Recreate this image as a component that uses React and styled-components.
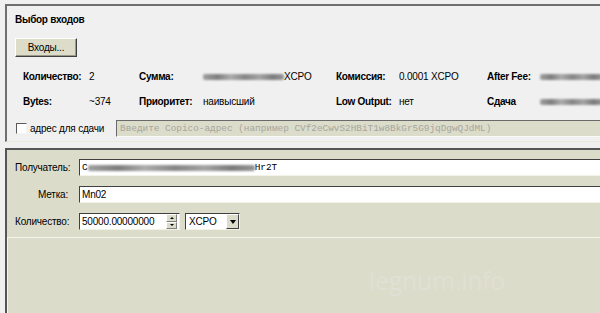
import styled, { createGlobalStyle } from 'styled-components'

const Global = createGlobalStyle`
  html, body {
    margin: 0;
    padding: 0;
  }
  body {
    background: #f0f0f0;
    font-family: "Liberation Sans", Arial, sans-serif;
    font-size: 10px;
    letter-spacing: -0.2px;
    color: #000;
  }
`

const Page = styled.div`
  width: 600px;
  height: 313px;
  overflow: hidden;
  box-sizing: border-box;
  padding: 4px 0 0 5px;
  display: flex;
  flex-direction: column;
`

const InputsPanel = styled.section`
  border-top: 2px solid #6f6f6f;
  border-left: 2px solid #6f6f6f;
  background: #f0f0f0;
  padding: 7px 0 4px 8px;
  display: flex;
  flex-direction: column;
  border-bottom: 1px solid #e9e9dc;
`

const Title = styled.div`
  font-weight: bold;
  letter-spacing: -0.3px;
  line-height: 13px;
`

const PushButton = styled.button`
  margin-top: 12px;
  width: 62px;
  height: 19px;
  padding: 0;
  font: inherit;
  letter-spacing: inherit;
  color: #000;
  background: #dcdcc8;
  border: 1px solid;
  border-color: #fff #404040 #404040 #fff;
  box-shadow: inset -1px -1px 0 #9a9a8c;
`

const Stats = styled.div`
  margin-top: 7px;
  padding-left: 8px;
  display: grid;
  grid-template-columns: 66px 50px 64px 133px 63px 88px 53px 1fr;
  grid-auto-rows: 25px;
  align-items: center;
  white-space: nowrap;
`

const StatLabel = styled.span`
  font-weight: bold;
  letter-spacing: -0.3px;
`

const StatValue = styled.span`
  display: flex;
  align-items: center;
`

/* redacted value in the screenshot: a grey smear */
const Smudge = styled.span`
  display: inline-block;
  flex: none;
  width: ${p => p.$w}px;
  height: 6px;
  border-radius: 2px;
  background: linear-gradient(
    90deg,
    #a0a0a0,
    #7e7e7e 18%,
    #acacac 34%,
    #868686 52%,
    #a4a4a4 70%,
    #7c7c7c 86%,
    #969696
  );
  filter: blur(1px);
`

const ChangeRow = styled.div`
  margin-top: 6px;
  height: 17px;
  display: flex;
  align-items: center;
`

const CheckBox = styled.span`
  margin-left: 1px;
  width: 9px;
  height: 9px;
  background: #fff;
  border: 1px solid;
  border-color: #5a5a5a #f4f4f4 #f4f4f4 #5a5a5a;
`

const CheckLabel = styled.span`
  margin-left: 3px;
  width: 86px;
`

const AddressField = styled.div`
  flex: 1;
  height: 17px;
  box-sizing: border-box;
  background: #dcdccb;
  border-top: 1px solid #6a6a6a;
  border-left: 1px solid #6a6a6a;
  border-bottom: 1px solid #fafafa;
  padding-left: 3px;
  font-family: "Liberation Mono", "Courier New", monospace;
  font-size: 9.4px;
  letter-spacing: 0;
  line-height: 15px;
  color: #a6a69c;
  white-space: nowrap;
  overflow: hidden;
`

const SendPanel = styled.section`
  margin-top: 6px;
  flex: 1;
  border-top: 2px solid #555;
  border-left: 2px solid #555;
  background: #dcdccb;
  display: flex;
  flex-direction: column;
`

const Form = styled.div`
  padding: 9px 0 0 8px;
  display: grid;
  grid-template-columns: 53px 1fr;
  column-gap: 11px;
  row-gap: 10px;
  align-items: center;
`

const FieldLabel = styled.label`
  text-align: right;
  white-space: nowrap;
`

const TextField = styled.div`
  height: 17px;
  box-sizing: border-box;
  background: #fff;
  border-top: 1px solid #404040;
  border-left: 1px solid #404040;
  border-bottom: 1px solid #f2f2e6;
  padding-left: 2px;
  line-height: 15px;
  white-space: nowrap;
  overflow: hidden;
  display: flex;
  align-items: center;
  font-family: ${p => (p.$mono ? '"Liberation Mono", "Courier New", monospace' : 'inherit')};
  font-size: ${p => (p.$mono ? '9.4px' : '10px')};
  letter-spacing: ${p => (p.$mono ? '0' : '-0.2px')};
`

const AmountRow = styled.div`
  display: flex;
  align-items: center;
  gap: 5px;
`

const SpinBox = styled.div`
  width: 101px;
  height: 17px;
  box-sizing: border-box;
  background: #fff;
  border: 1px solid;
  border-color: #404040 #f2f2e6 #f2f2e6 #404040;
  display: flex;
  align-items: stretch;
`

const SpinText = styled.span`
  flex: 1;
  padding-left: 2px;
  line-height: 15px;
`

const SpinButtons = styled.div`
  width: 11px;
  margin-right: 2px;
  display: flex;
  flex-direction: column;
`

const SpinArrow = styled.div`
  flex: 1;
  background: #dcdccb;
  border: 1px solid;
  border-color: #fff #808080 #808080 #fff;
  display: flex;
  align-items: center;
  justify-content: center;
  &::after {
    content: '';
    border-left: 2px solid transparent;
    border-right: 2px solid transparent;
    ${p => (p.$down ? 'border-top: 2px solid #000;' : 'border-bottom: 2px solid #000;')}
  }
`

const Combo = styled.div`
  width: 55px;
  height: 17px;
  box-sizing: border-box;
  background: #fff;
  border: 1px solid;
  border-color: #404040 #f2f2e6 #f2f2e6 #404040;
  display: flex;
  align-items: stretch;
`

const ComboText = styled.span`
  flex: 1;
  padding-left: 3px;
  line-height: 15px;
`

const ComboButton = styled.span`
  width: 13px;
  box-sizing: border-box;
  background: #dcdccb;
  border: 1px solid;
  border-color: #fff #404040 #404040 #fff;
  display: flex;
  align-items: center;
  justify-content: center;
  &::after {
    content: '';
    border-left: 3.5px solid transparent;
    border-right: 3.5px solid transparent;
    border-top: 4px solid #000;
  }
`

const BottomArea = styled.div`
  position: relative;
  margin-top: 7px;
  flex: 1;
  border-top: 1px solid #f5f5ec;
  border-left: 1px solid #f5f5ec;
`

const Watermark = styled.span`
  position: absolute;
  left: 361px;
  top: 25px;
  font-family: "Open Sans", sans-serif;
  font-size: 25px;
  color: #e0e0d4;
  letter-spacing: -0.3px;
`

export default function App() {
  return (
    <>
      <Global />
      <Page>
        <InputsPanel>
          <Title>Выбор входов</Title>
          <div>
            <PushButton>Входы...</PushButton>
          </div>
          <Stats>
            <StatLabel>Количество:</StatLabel>
            <StatValue>2</StatValue>
            <StatLabel>Сумма:</StatLabel>
            <StatValue>
              <Smudge $w={81} />XCPO
            </StatValue>
            <StatLabel>Комиссия:</StatLabel>
            <StatValue>0.0001 XCPO</StatValue>
            <StatLabel>After Fee:</StatLabel>
            <StatValue>
              <Smudge $w={62} />
            </StatValue>

            <StatLabel>Bytes:</StatLabel>
            <StatValue>~374</StatValue>
            <StatLabel>Приоритет:</StatLabel>
            <StatValue>наивысший</StatValue>
            <StatLabel>Low Output:</StatLabel>
            <StatValue>нет</StatValue>
            <StatLabel>Сдача</StatLabel>
            <StatValue>
              <Smudge $w={62} />
            </StatValue>
          </Stats>
          <ChangeRow>
            <CheckBox />
            <CheckLabel>адрес для сдачи</CheckLabel>
            <AddressField>
              Введите Copico-адрес (например CVf2eCwvS2HBiT1w8BkGr5G9jqDgwQJdML)
            </AddressField>
          </ChangeRow>
        </InputsPanel>

        <SendPanel>
          <Form>
            <FieldLabel>Получатель:</FieldLabel>
            <TextField $mono>
              C<Smudge $w={167} />Hr2T
            </TextField>

            <FieldLabel>Метка:</FieldLabel>
            <TextField>Mn02</TextField>

            <FieldLabel>Количество:</FieldLabel>
            <AmountRow>
              <SpinBox>
                <SpinText>50000.00000000</SpinText>
                <SpinButtons>
                  <SpinArrow />
                  <SpinArrow $down />
                </SpinButtons>
              </SpinBox>
              <Combo>
                <ComboText>XCPO</ComboText>
                <ComboButton />
              </Combo>
            </AmountRow>
          </Form>
          <BottomArea>
            <Watermark>legnum.info</Watermark>
          </BottomArea>
        </SendPanel>
      </Page>
    </>
  )
}
